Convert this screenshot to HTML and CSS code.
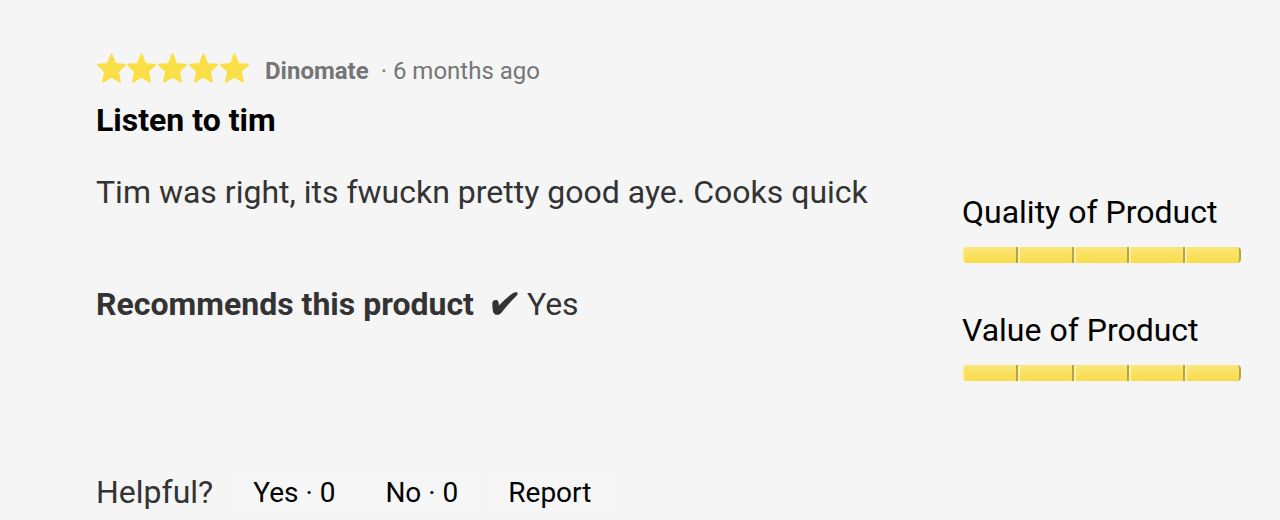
FILE: index.html
```html
<!DOCTYPE html>
<html lang="en">
<head>
<meta charset="utf-8">
<meta name="viewport" content="width=device-width, initial-scale=1">
<title>Listen to tim</title>
<link rel="stylesheet" href="styles.css">
</head>
<body>
<article class="review">
  <header class="review-header">
    <div class="meta">
      <svg class="stars" viewBox="0 0 154 32" role="img" aria-label="5 out of 5 stars">
        <defs>
          <path id="star" d="M15.5 2.5 L19.3 12 L29 12.8 L21.8 19.4 L24 29.6 L15.5 24.6 L7 29.6 L9.2 19.4 L2 12.8 L11.7 12 Z"/>
        </defs>
        <use href="#star" x="0"/>
        <use href="#star" x="30"/>
        <use href="#star" x="61"/>
        <use href="#star" x="92"/>
        <use href="#star" x="123"/>
      </svg>
      <span class="author">Dinomate</span>
      <span class="date">· 6 months ago</span>
    </div>
    <h3 class="title">Listen to tim</h3>
  </header>
  <div class="columns">
    <div class="content">
      <p class="text">Tim was right, its fwuckn pretty good aye. Cooks quick</p>
      <p class="recommend">
        <strong>Recommends this product</strong>
        <svg class="tick" viewBox="0 0 28 26" aria-hidden="true"><path d="M1.3 12.4C1.2 9.8 3.4 8.8 5.4 9C7.6 9.3 7.8 11.5 7.9 14.6C12 10.5 17.6 4.8 22.2 2C24.2 0.9 26.6 1 26.7 2.4C26.8 3.8 25.4 5 23.6 6.8C18.6 11.7 14.6 16.4 10.6 21.4C8.8 23.9 5.6 24.6 3.6 23C1.6 21.4 1.5 17 1.3 12.4Z"/></svg>
        <span>Yes</span>
      </p>
    </div>
    <aside class="ratings">
      <div class="rating">
        <div class="rating-label">Quality of Product</div>
        <div class="bar" role="img" aria-label="5 out of 5"><i></i><i></i><i></i><i></i><i></i></div>
      </div>
      <div class="rating">
        <div class="rating-label">Value of Product</div>
        <div class="bar" role="img" aria-label="5 out of 5"><i></i><i></i><i></i><i></i><i></i></div>
      </div>
    </aside>
  </div>
  <footer class="feedback">
    <span class="question">Helpful?</span>
    <button class="action" type="button">Yes · 0</button>
    <button class="action" type="button">No · 0</button>
    <button class="action" type="button">Report</button>
  </footer>
</article>
</body>
</html>
```
FILE: styles.css
```css
* { box-sizing: border-box; }

body {
  margin: 0;
  background: #f5f5f5;
  color: #333;
  font: 32px/40px Roboto, "Liberation Sans", sans-serif;
}

.review { padding: 52px 39px 0 96px; }

.meta {
  display: flex;
  align-items: flex-start;
  color: #757575;
  font-size: 24px;
  line-height: 38px;
}

.stars {
  width: 154px;
  height: 32px;
  margin-right: 15px;
  fill: #fbdf47;
  stroke: #fbdf47;
  stroke-width: 2;
  stroke-linejoin: round;
}

.author { font-weight: 700; }
.date { margin-left: 12px; }

.title {
  margin: 10px 0 0;
  color: #000;
  font-size: 32px;
  font-weight: 700;
}

.columns {
  display: grid;
  grid-template-columns: 1fr 279px;
  gap: 32px;
  padding-top: 32px;
}

.text { margin: 0; }

.recommend {
  display: flex;
  align-items: center;
  margin: 72px 0 0;
}

.tick {
  width: 28px;
  height: 26px;
  margin: 0 8px 0 17px;
  fill: #333;
}

.ratings {
  display: grid;
  gap: 47px;
  padding-top: 20px;
  color: #000;
}

.bar {
  display: flex;
  height: 16px;
  margin-top: 15px;
  border-radius: 3px;
  overflow: hidden;
}

.bar i {
  flex: 1;
  border-right: 2px solid #b8a542;
  border-left: 2px solid #fdf2ae;
  background: linear-gradient(#fbe67a, #fadd49);
}

.bar i:first-child { border-radius: 4px 0 0 4px; }
.bar i:last-child { border-radius: 0 4px 4px 0; }

.feedback {
  display: flex;
  align-items: center;
  padding-top: 90px;
}

.question { margin-right: 19px; }

.action {
  height: 42px;
  margin-right: 8px;
  padding: 2px 21px 0;
  border: 0;
  border-radius: 4px;
  background: #f6f6f6;
  color: #000;
  font: inherit;
  font-size: 28px;
}
```
